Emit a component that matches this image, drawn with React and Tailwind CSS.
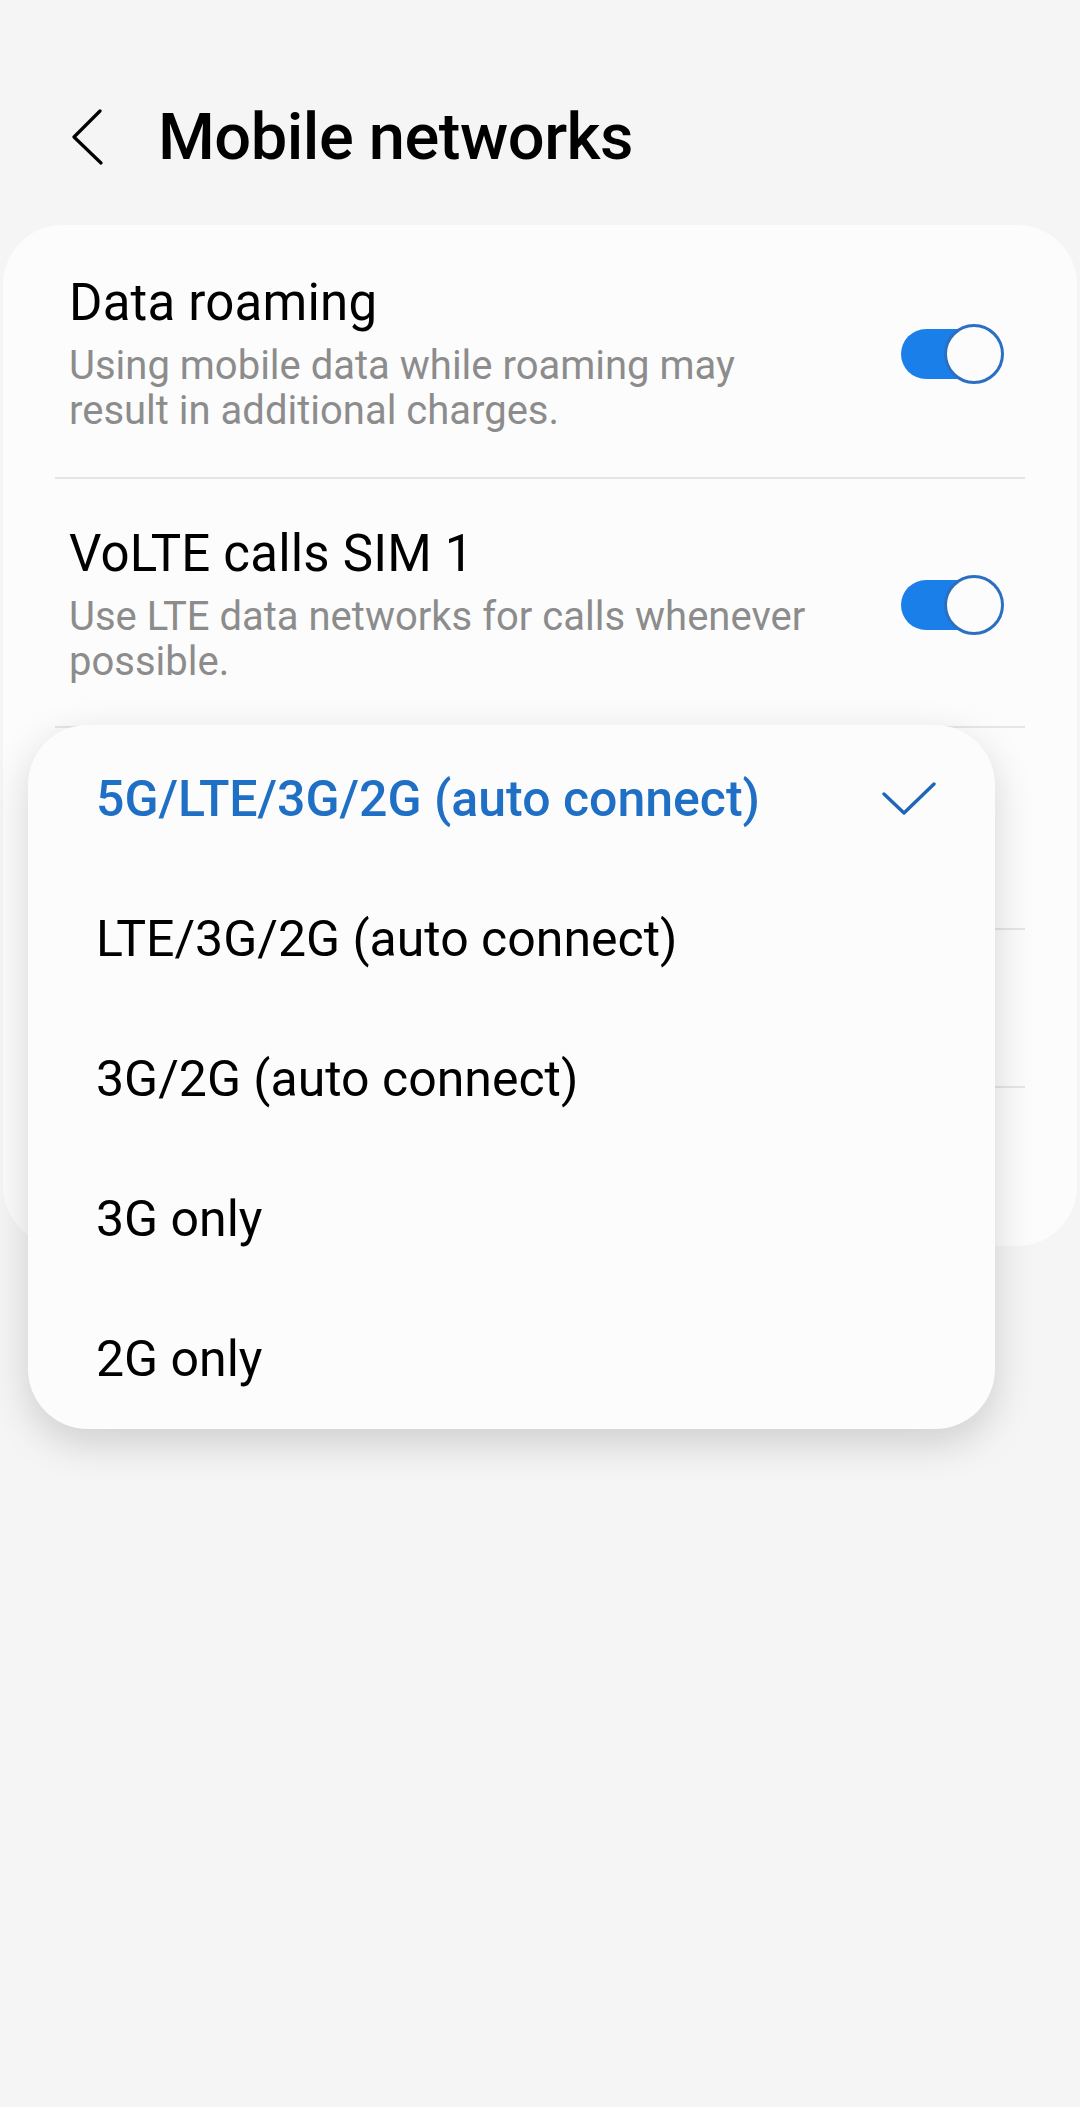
import React from "react";

function Toggle() {
  return (
    <div className="relative w-[103px] h-[60px] shrink-0">
      <div className="absolute left-0 top-[5px] w-[88px] h-[50px] rounded-full bg-[#1b7fea]" />
      <div className="absolute right-0 top-0 w-[60px] h-[60px] rounded-full bg-[#fcfcfc] border-[3px] border-[#2a6fc2]" />
    </div>
  );
}

function ToggleRow({ title, sub, pt, pb }) {
  return (
    <div className={`flex items-center justify-between pl-[14px] pr-[21px] ${pt} ${pb}`}>
      <div className="flex flex-col gap-[11px]">
        <div className="text-[51px] leading-[58px] text-black tracking-[0.2px]">{title}</div>
        <div className="text-[40px] leading-[45px] text-[#8c8c8c] w-[765px]">{sub}</div>
      </div>
      <Toggle />
    </div>
  );
}

const options = [
  "5G/LTE/3G/2G (auto connect)",
  "LTE/3G/2G (auto connect)",
  "3G/2G (auto connect)",
  "3G only",
  "2G only",
];

export default function App() {
  return (
    <div
      className="relative w-[1080px] min-h-[2107px] bg-[#f5f5f5] pt-[98px]"
      style={{ fontFamily: "Roboto, 'Noto Sans', sans-serif" }}
    >
      {/* Header */}
      <div className="flex items-center h-[78px] pl-[72px]">
        <svg width="34" height="56" viewBox="0 0 34 56" className="shrink-0">
          <path d="M28 2 L2 28 L29 54" fill="none" stroke="#000" strokeWidth="3.2" strokeLinecap="round" strokeLinejoin="round" />
        </svg>
        <div className="ml-[52px] text-[65px] leading-[78px] font-medium text-black tracking-[-0.5px]">
          Mobile networks
        </div>
      </div>

      {/* Card */}
      <div className="mx-[3px] mt-[49px] bg-[#fcfcfc] rounded-[60px] px-[52px]">
        <ToggleRow
          title="Data roaming"
          sub="Using mobile data while roaming may result in additional charges."
          pt="pt-[49px]"
          pb="pb-[44px]"
        />
        <div className="h-[2px] bg-[#e6e6e6]" />
        <ToggleRow
          title="VoLTE calls SIM 1"
          sub="Use LTE data networks for calls whenever possible."
          pt="pt-[46px]"
          pb="pb-[42px]"
        />
        <div className="h-[2px] bg-[#e6e6e6]" />
        <div className="h-[200px]" />
        <div className="h-[2px] bg-[#e6e6e6]" />
        <div className="h-[156px]" />
        <div className="h-[2px] bg-[#e6e6e6]" />
        <div className="h-[158px]" />
      </div>

      {/* Dropdown popup */}
      <div className="absolute left-[28px] top-[725px] w-[967px] bg-[#fcfcfc] rounded-[60px] pt-[4px] shadow-[0_14px_40px_rgba(0,0,0,0.16)]">
        {options.map((o, i) => (
          <div key={o} className="h-[140px] flex items-center justify-between pl-[68px] pr-[59px]">
            <span
              className={
                i === 0
                  ? "text-[50px] leading-[58px] font-medium text-[#1f6fc5]"
                  : "text-[50px] leading-[58px] text-black"
              }
            >
              {o}
            </span>
            {i === 0 && (
              <svg width="54" height="34" viewBox="0 0 54 34" className="shrink-0">
                <path d="M2 12 L22 31 L52 2" fill="none" stroke="#2066b8" strokeWidth="3.4" strokeLinecap="round" strokeLinejoin="round" />
              </svg>
            )}
          </div>
        ))}
      </div>
    </div>
  );
}
